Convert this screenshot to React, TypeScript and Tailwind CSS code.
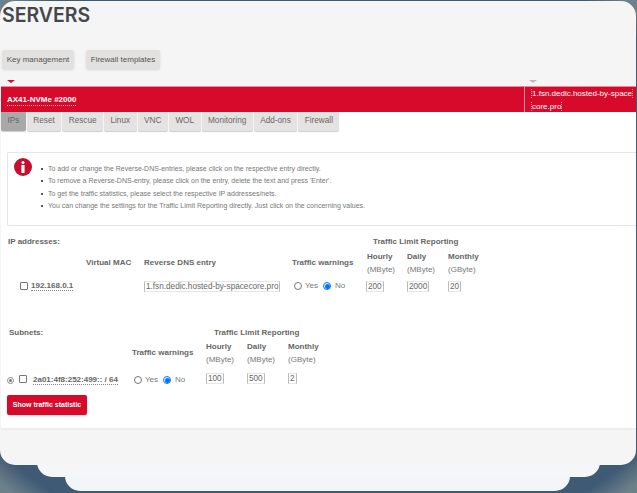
const tabs = ["IPs", "Reset", "Rescue", "Linux", "VNC", "WOL", "Monitoring", "Add-ons", "Firewall"];

const notes = [
  "To add or change the Reverse-DNS-entries, please click on the respective entry directly.",
  "To remove a Reverse-DNS-entry, please click on the entry, delete the text and press 'Enter'.",
  "To get the traffic statistics, please select the respective IP addresses/nets.",
  "You can change the settings for the Traffic Limit Reporting directly. Just click on the concerning values.",
];

function Editable({ value, className }: { value: string; className?: string }) {
  return (
    <span className={`block h-[11px] w-fit border-x border-y border-x-[#bbb] border-y-[#e6e6e6] px-[1px] text-[8.2px] leading-[9px] text-[#666] ${className ?? ""}`}>
      {value}
    </span>
  );
}

function Radio({ checked }: { checked?: boolean }) {
  return (
    <span className={`inline-flex h-[8px] w-[8px] items-center justify-center rounded-full border ${checked ? "border-[#0075ff]" : "border-[#767676]"} bg-white`}>
      {checked && <span className="h-[5px] w-[5px] rounded-full bg-[#0075ff]" />}
    </span>
  );
}

function Warnings() {
  return (
    <div className="flex items-center text-[8px] text-[#777]">
      <Radio />
      <span className="ml-[3px] w-[18px]">Yes</span>
      <Radio checked />
      <span className="ml-[4px]">No</span>
    </div>
  );
}

function Unit({ title, unit }: { title: string; unit: string }) {
  return (
    <div>
      <div className="text-[8px] font-bold leading-[13px] text-[#666]">{title}</div>
      <div className="text-[8px] leading-[13px] text-[#777]">{unit}</div>
    </div>
  );
}

export default function App() {
  return (
    <div className="h-[493px] w-[637px] overflow-hidden bg-[radial-gradient(ellipse_at_center,#3f5a75_92%,#6b8088_98%)] pt-[1px] font-['Liberation_Sans',Arial,sans-serif]">
      <div className="relative z-20 h-[464px] w-[636px] rounded-[15px] bg-[#f5f5f6]">
        <h1 className="pl-[2px] pt-[3px] font-['Inter',sans-serif] text-[19.5px] font-semibold leading-[22px] text-[#44484b]">
          SERVERS
        </h1>

        <div className="mt-[24px] flex gap-[12px] pl-[2px]">
          <button className="h-[19px] w-[72px] rounded-[2px] bg-[#e2e1df] text-[8px] text-[#555] shadow-sm">Key management</button>
          <button className="h-[19px] w-[74px] rounded-[2px] bg-[#e2e1df] text-[8px] text-[#555] shadow-sm">Firewall templates</button>
        </div>

        <div className="mt-[10px] flex h-[7px] justify-between pl-[7px] pr-[99px]">
          <span className="mt-[1px] h-0 w-0 border-x-[4px] border-t-[3px] border-x-transparent border-t-[#d70a2c]" />
          <span className="mt-[1px] h-0 w-0 border-x-[4px] border-t-[3px] border-x-transparent border-t-[#bbbbbb]" />
        </div>

        <div className="ml-[1px] flex h-[26px] border-t border-[#f08a9a] bg-[#d70a2c] text-white">
          <div className="flex w-[523px] items-center pl-[6px] pt-[2px]">
            <span className="border-b border-dotted border-white/70 text-[8px] font-bold leading-[10px]">AX41-NVMe #2000</span>
          </div>
          <div className="flex-1 border-l border-[#f08a9a] pl-[6px] pt-[1px] text-[8px] leading-[12.5px]">
            <span className="border border-y-0 border-dotted border-white/60">1.fsn.dedic.hosted-by-space</span>
            <br />
            <span className="border border-y-0 border-dotted border-white/60">core.pro</span>
          </div>
        </div>

        <div className="ml-[1px] h-[318px] border-b-2 border-[#eeeeee] bg-white">
          <div className="flex gap-[1px]">
            {tabs.map((tab, i) => (
              <div
                key={tab}
                className={`flex h-[19px] items-center rounded-b-[2px] px-[6.5px] text-[8.2px] text-[#666] shadow-[0_1px_1px_rgba(0,0,0,0.2)] ${
                  i === 0 ? "bg-[#a9a9a9]" : "bg-[#e4e3e1]"
                }`}
              >
                {tab}
              </div>
            ))}
          </div>

          <div className="ml-[6px] mt-[21px] flex h-[74px] rounded-l-[2px] border border-r-0 border-[#e4e6e8] pl-[6px] pt-[5px]">
            <div className="flex h-[18px] w-[18px] flex-none items-center justify-center rounded-full bg-[#c40f30]">
              <svg width="4" height="12" viewBox="0 0 4 12" fill="white">
                <circle cx="2" cy="1.6" r="1.5" />
                <rect x="0.4" y="4" width="3.2" height="8" rx="0.4" />
              </svg>
            </div>
            <ul className="ml-[9px] mt-[5px] list-none text-[7px] leading-[12.3px] text-[#777]">
              {notes.map((note) => (
                <li key={note} className="flex items-center">
                  <span className="mr-[5px] h-[2px] w-[2px] bg-[#555]" />
                  {note}
                </li>
              ))}
            </ul>
          </div>

          {/* IP addresses */}
          <div className="mt-[11px] flex pl-[7px] text-[8px] font-bold leading-[10px] text-[#666]">
            <div className="w-[365px]">IP addresses:</div>
            <div>Traffic Limit Reporting</div>
          </div>

          <div className="mt-[3px] grid grid-cols-[78px_58px_148px_75px_40px_41px_80px] items-center pl-[7px]">
            <div />
            <div className="text-[8px] font-bold text-[#666]">Virtual MAC</div>
            <div className="text-[8px] font-bold text-[#666]">Reverse DNS entry</div>
            <div className="text-[8px] font-bold text-[#666]">Traffic warnings</div>
            <Unit title="Hourly" unit="(MByte)" />
            <Unit title="Daily" unit="(MByte)" />
            <Unit title="Monthly" unit="(GByte)" />
          </div>

          <div className="mt-[3px] grid h-[14px] grid-cols-[78px_58px_148px_75px_40px_41px_80px] items-center pl-[7px]">
            <div className="flex items-center pl-[12px]">
              <span className="h-[8px] w-[8px] rounded-[1px] border border-[#767676] bg-white" />
              <span className="ml-[3px] border-b border-dotted border-[#888] text-[8px] font-bold leading-[9px] text-[#666]">192.168.0.1</span>
            </div>
            <div />
            <Editable value="1.fsn.dedic.hosted-by-spacecore.pro" />
            <div className="pl-[2px]"><Warnings /></div>
            <Editable value="200" className="-ml-[1px]" />
            <Editable value="2000" />
            <Editable value="20" />
          </div>

          {/* Subnets */}
          <div className="mt-[35px] flex pl-[8px] text-[8px] font-bold leading-[10px] text-[#666]">
            <div className="w-[205px]">Subnets:</div>
            <div>Traffic Limit Reporting</div>
          </div>

          <div className="mt-[2px] grid grid-cols-[125px_74px_41px_41px_80px] items-center pl-[6px]">
            <div />
            <div className="text-[8px] font-bold text-[#666]">Traffic warnings</div>
            <Unit title="Hourly" unit="(MByte)" />
            <Unit title="Daily" unit="(MByte)" />
            <Unit title="Monthly" unit="(GByte)" />
          </div>

          <div className="mt-[7px] grid h-[14px] grid-cols-[127px_72px_41px_41px_80px] items-center pl-[6px]">
            <div className="flex items-center">
              <span className="flex h-[7px] w-[7px] items-center justify-center rounded-full border border-[#888]">
                <span className="h-[3px] w-[3px] rounded-full bg-[#777]" />
              </span>
              <span className="mb-[3px] ml-[5px] h-[8px] w-[8px] rounded-[1px] border border-[#767676] bg-white" />
              <span className="ml-[6px] border-b border-dotted border-[#888] text-[8px] font-bold leading-[9px] text-[#666]">2a01:4f8:252:499:: / 64</span>
            </div>
            <div><Warnings /></div>
            <Editable value="100" className="-mt-[4px]" />
            <Editable value="500" className="-mt-[4px]" />
            <Editable value="2" className="-mt-[4px]" />
          </div>

          <button className="ml-[6px] mt-[8px] h-[20px] w-[80px] rounded-[2px] bg-[#d70a2c] text-[7px] font-bold text-white shadow-sm">
            Show traffic statistic
          </button>
        </div>
      </div>

      <div className="relative z-10 ml-[37px] mr-[37px] -mt-[20px] h-[32px] rounded-[15px] bg-[#f5f6f7]" />
      <div className="ml-[65px] mr-[67px] -mt-[20px] h-[34px] rounded-[15px] bg-[#f3f6f8]" />
    </div>
  );
}
